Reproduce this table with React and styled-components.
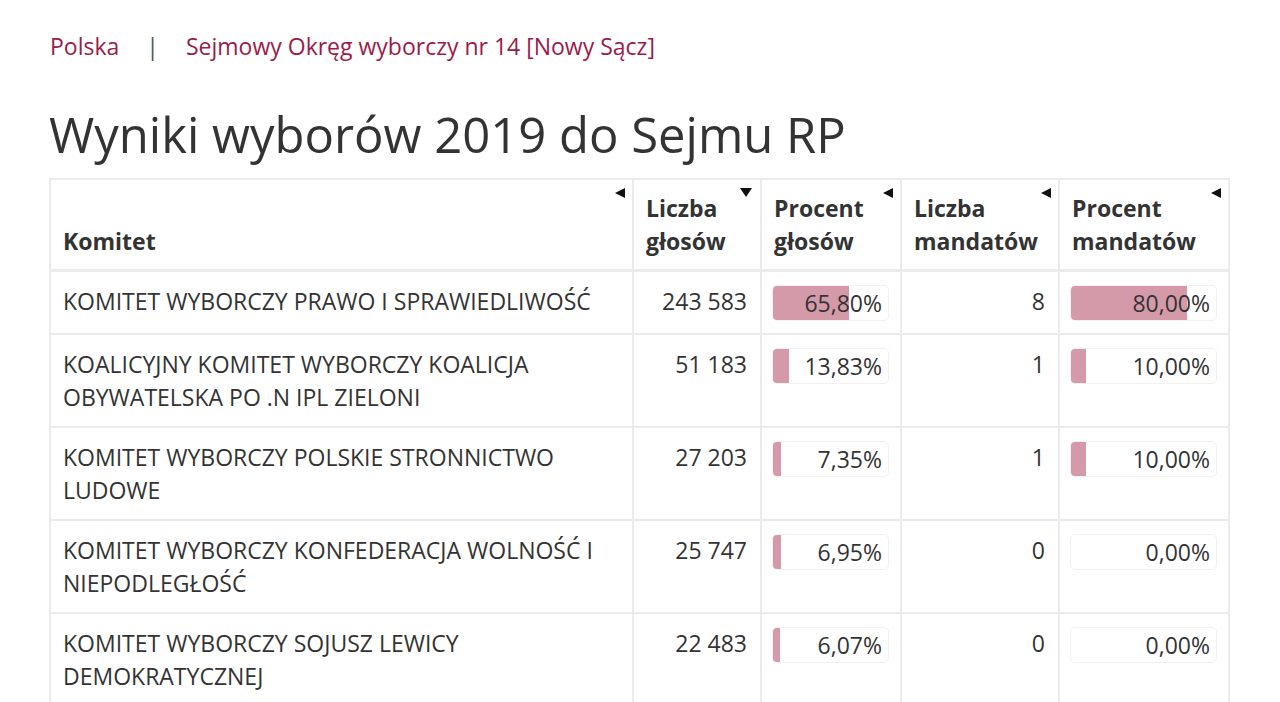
import React from "react";
import styled, { createGlobalStyle } from "styled-components";

const GlobalStyle = createGlobalStyle`
  body {
    margin: 0;
    background: #fff;
    font-family: "Open Sans", "Noto Sans", sans-serif;
    color: #333;
  }
`;

const Page = styled.div`
  padding: 28px 52px 0 49px;
`;

const Breadcrumbs = styled.nav`
  display: flex;
  align-items: center;
  font-size: 23px;
  line-height: 36px;
  padding-left: 1px;
`;

const Crumb = styled.a`
  color: #9b1c48;
  text-decoration: none;
`;

const Separator = styled.span`
  color: #555;
  margin: 0 27px 0 27px;
`;

const Title = styled.h1`
  font-size: 49px;
  font-weight: 400;
  line-height: 60px;
  margin: 40px 0 14px;
  color: #333;
`;

const Table = styled.table`
  width: 100%;
  border-collapse: collapse;
  border: 2px solid #ebebeb;
  table-layout: fixed;
`;

const Th = styled.th`
  position: relative;
  text-align: left;
  vertical-align: bottom;
  font-size: 23px;
  font-weight: 700;
  line-height: 33px;
  padding: 12px 10px 11px 12px;
  border: 2px solid #ebebeb;
  border-bottom-width: 3px;
  color: #333;
`;

const SortArrow = styled.span`
  position: absolute;
  width: 0;
  height: 0;
  border-style: solid;
  ${({ $dir }) =>
    $dir === "down"
      ? "border-width: 9px 6.5px 0 6.5px; border-color: #111 transparent transparent transparent; top: 8px; right: 8px;"
      : "border-width: 5.5px 10px 5.5px 0; border-color: transparent #111 transparent transparent; top: 8px; right: 7px;"}
`;

const Td = styled.td`
  vertical-align: top;
  font-size: 23px;
  line-height: 33px;
  padding: 13px 13px 12px 12px;
  border: 2px solid #ebebeb;
  text-align: ${({ $num }) => ($num ? "right" : "left")};
  color: #333;
`;

const BarCell = styled.td`
  vertical-align: top;
  padding: 13px 11px 12px 10px;
  border: 2px solid #ebebeb;
`;

const Bar = styled.div`
  position: relative;
  height: 34px;
  border-radius: 5px;
  border: 1px solid #f1f1f1;
  background: #fff;
  overflow: hidden;
`;

const BarFill = styled.div`
  position: absolute;
  left: 0;
  top: 0;
  bottom: 0;
  background: #d59aaa;
`;

const BarLabel = styled.div`
  position: relative;
  text-align: right;
  font-size: 23px;
  line-height: 34px;
  padding-right: 6px;
  color: #333;
`;

const columns = [
  { label: "Komitet", width: 583, arrow: "left" },
  { label: ["Liczba", "głosów"], width: 128, arrow: "down" },
  { label: ["Procent", "głosów"], width: 140, arrow: "left" },
  { label: ["Liczba", "mandatów"], width: 158, arrow: "left" },
  { label: ["Procent", "mandatów"], width: 170, arrow: "left" },
];

const rows = [
  ["KOMITET WYBORCZY PRAWO I SPRAWIEDLIWOŚĆ", "243 583", 65.8, 8, 80],
  ["KOALICYJNY KOMITET WYBORCZY KOALICJA OBYWATELSKA PO .N IPL ZIELONI", "51 183", 13.83, 1, 10],
  ["KOMITET WYBORCZY POLSKIE STRONNICTWO LUDOWE", "27 203", 7.35, 1, 10],
  ["KOMITET WYBORCZY KONFEDERACJA WOLNOŚĆ I NIEPODLEGŁOŚĆ", "25 747", 6.95, 0, 0],
  ["KOMITET WYBORCZY SOJUSZ LEWICY DEMOKRATYCZNEJ", "22 483", 6.07, 0, 0],
];

const fmt = v => v.toFixed(2).replace(".", ",") + "%";

const PercentBar = ({ value }) => (
  <Bar>
    <BarFill style={{ width: `${value}%` }} />
    <BarLabel>{fmt(value)}</BarLabel>
  </Bar>
);

const App = () => {
  return (
    <Page>
      <GlobalStyle />
      <Breadcrumbs>
        <Crumb href="#">Polska</Crumb>
        <Separator>|</Separator>
        <Crumb href="#">Sejmowy Okręg wyborczy nr 14 [Nowy Sącz]</Crumb>
      </Breadcrumbs>

      <Title>Wyniki wyborów 2019 do Sejmu RP</Title>

      <Table>
        <colgroup>
          {columns.map((c, i) => (
            <col key={i} style={{ width: c.width }} />
          ))}
        </colgroup>
        <thead>
          <tr>
            {columns.map((c, i) => (
              <Th key={i}>
                <SortArrow $dir={c.arrow} />
                {Array.isArray(c.label) ? (
                  <>
                    {c.label[0]}
                    <br />
                    {c.label[1]}
                  </>
                ) : (
                  c.label
                )}
              </Th>
            ))}
          </tr>
        </thead>
        <tbody>
          {rows.map((r, i) => (
            <tr key={i}>
              <Td>{r[0]}</Td>
              <Td $num>{r[1]}</Td>
              <BarCell>
                <PercentBar value={r[2]} />
              </BarCell>
              <Td $num>{r[3]}</Td>
              <BarCell>
                <PercentBar value={r[4]} />
              </BarCell>
            </tr>
          ))}
        </tbody>
      </Table>
    </Page>
  );
};

export default App;
